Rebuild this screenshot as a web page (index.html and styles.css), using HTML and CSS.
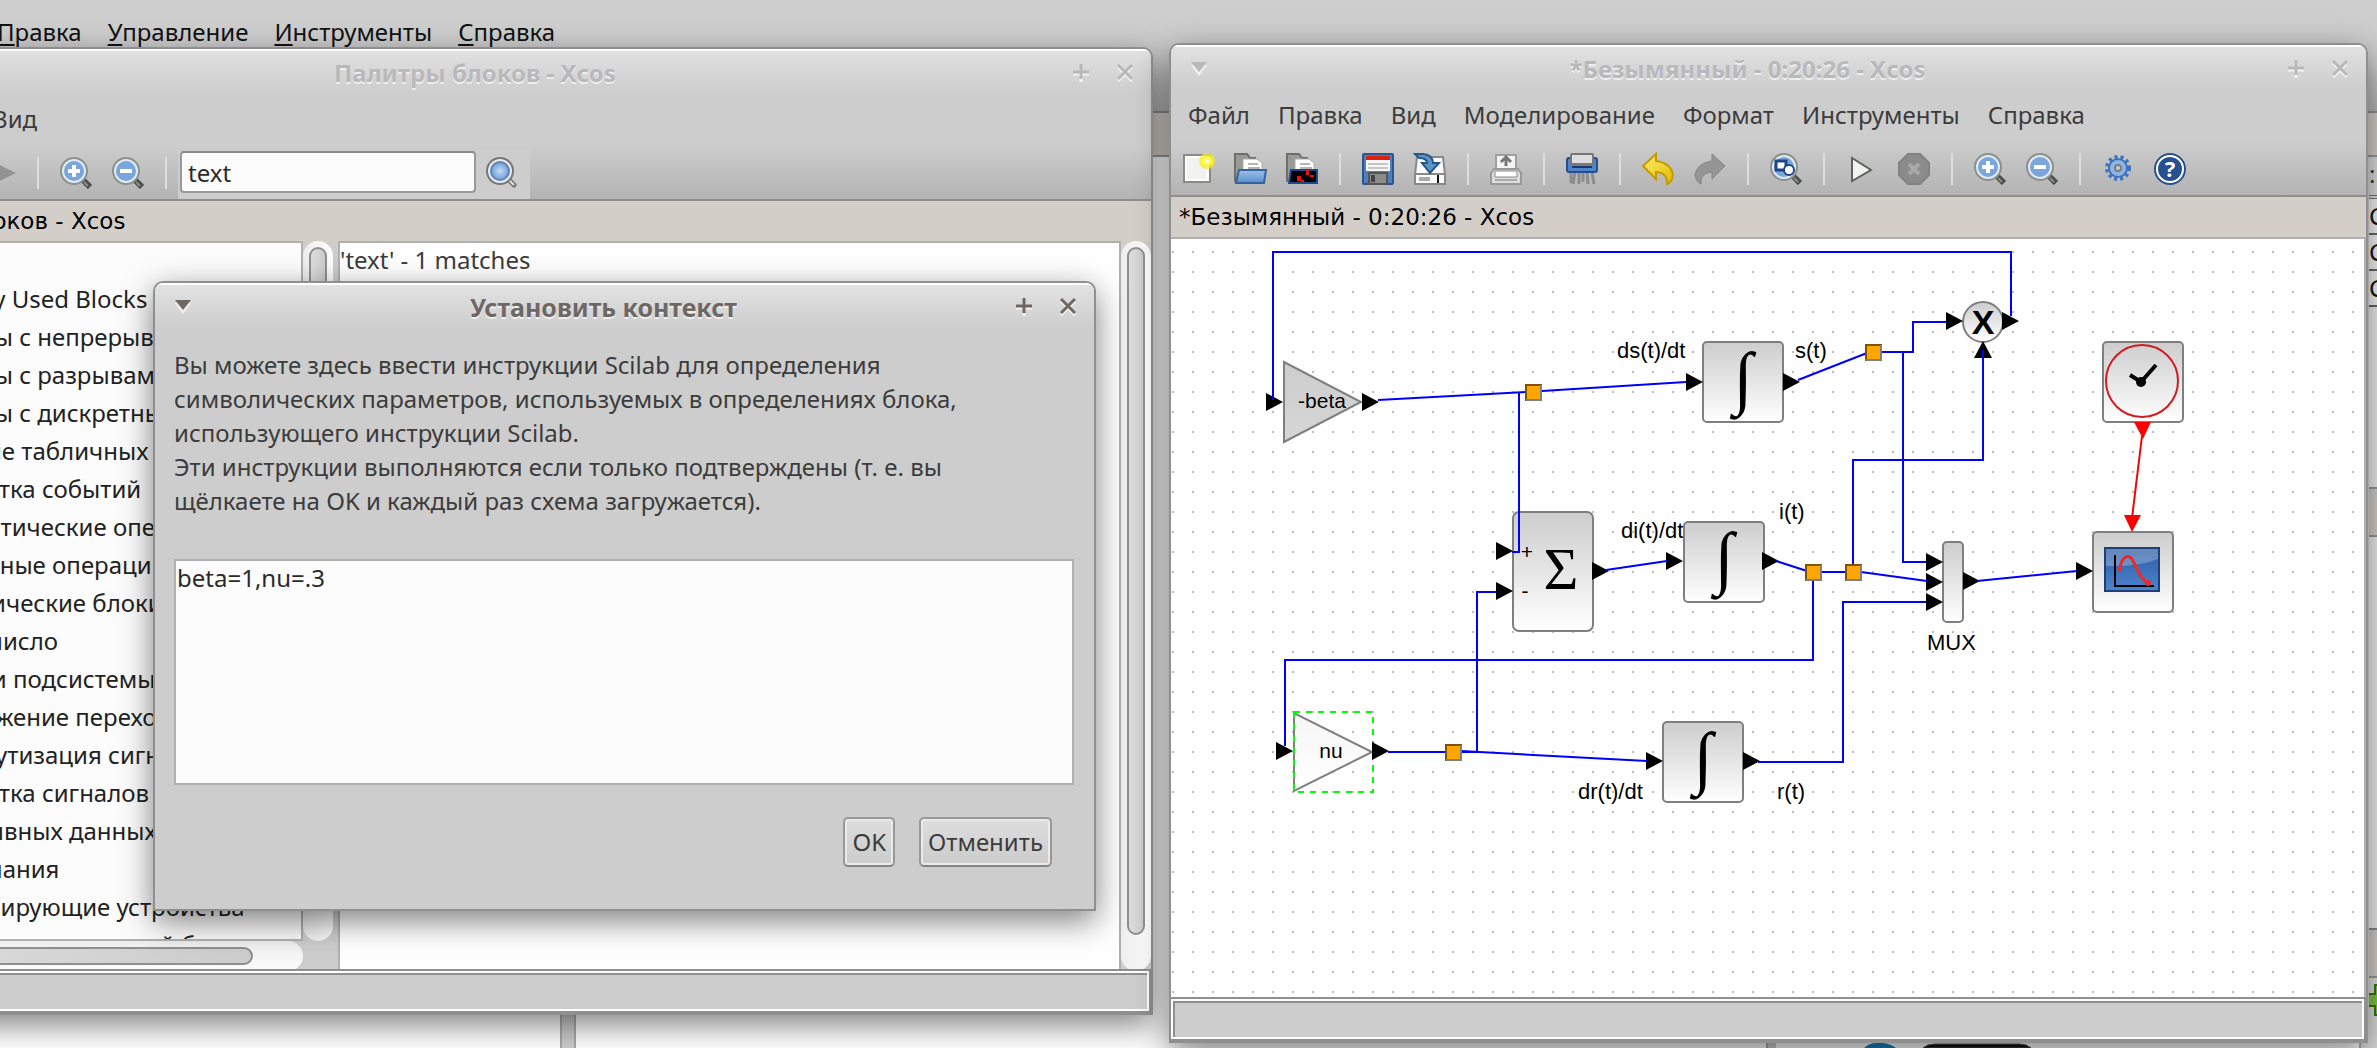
FILE: index.html
```html
<!DOCTYPE html>
<html lang="ru">
<head>
<meta charset="utf-8">
<title>Xcos</title>
<link rel="stylesheet" href="styles.css">
</head>
<body>
<svg class="defs" aria-hidden="true">
  <defs>
    <linearGradient id="block" x1="0" y1="0" x2="0" y2="1"><stop offset="0" stop-color="#cdcdcd"/><stop offset="1" stop-color="#fff"/></linearGradient>
    <linearGradient id="screen" x1="0" y1="0" x2="0" y2="1"><stop offset="0" stop-color="#2f5da3"/><stop offset="1" stop-color="#4b84cf"/></linearGradient>
    <linearGradient id="folder" x1="0" y1="0" x2="0" y2="1"><stop offset="0" stop-color="#9cc0e8"/><stop offset="1" stop-color="#5a8fca"/></linearGradient>
    <linearGradient id="gold" x1="0" y1="0" x2="1" y2="1"><stop offset="0" stop-color="#fdf06a"/><stop offset="1" stop-color="#e2b800"/></linearGradient>
    <radialGradient id="lens"><stop offset="0" stop-color="#c4dbf3"/><stop offset="1" stop-color="#6f9fd8"/></radialGradient>
    <pattern id="dots" x="1172" y="251" width="20" height="20" patternUnits="userSpaceOnUse"><rect width="2" height="2" fill="#bdbdbd"/></pattern>
    <symbol id="glass" viewBox="0 0 32 32">
      <path d="M22 22l8 8" stroke="#4b4f4b" stroke-width="6"/>
      <path d="M24 25l4 4" stroke="#8b8f8a" stroke-width="2"/>
      <circle cx="14" cy="14" r="13" fill="#dfeaf5" stroke="#8d918b" stroke-width="2"/>
      <circle cx="14" cy="14" r="10" fill="#7ba6db"/>
    </symbol>
    <symbol id="zoom-in" viewBox="0 0 32 32"><use href="#glass"/><path d="M14 8v12M8 14h12" stroke="#fff" stroke-width="4"/></symbol>
    <symbol id="zoom-out" viewBox="0 0 32 32"><use href="#glass"/><path d="M8 14h12" stroke="#fff" stroke-width="4"/></symbol>
    <symbol id="plus" viewBox="0 0 16 18"><path d="M8 3v15M0 10h16" stroke="#f3f3f3" stroke-width="3"/><path d="M8 0v15M0 8h16" stroke="currentColor" stroke-width="3"/></symbol>
    <symbol id="cross" viewBox="0 0 16 18"><path d="M1 3l14 14M15 3L1 17" stroke="#f3f3f3" stroke-width="3"/><path d="M1 1l14 14M15 1L1 15" stroke="currentColor" stroke-width="3"/></symbol>
    <symbol id="arrow-down" viewBox="0 0 16 14"><path d="M0 3h16L8 14z" fill="#f0f0f0"/><path d="M0 0h16L8 10z" fill="currentColor"/></symbol>
  </defs>
</svg>

<main class="desktop">
  <section class="console">
    <nav class="console-menu">
      <a href="#"><u>П</u>равка</a><a href="#"><u>У</u>правление</a><a href="#"><u>И</u>нструменты</a><a href="#"><u>С</u>правка</a>
    </nav>
    <div class="console-tab"></div>
    <div class="console-body">
      <div class="pane pane-files"></div>
      <div class="pane pane-command"></div>
      <div class="pane pane-news">
        <svg width="180" height="5"><path d="M1 5Q6 0 14 0h6q8 1 13 5z" fill="#1680bb"/><path d="M60 5q4-4 12-4h84q8 0 12 4z" fill="#111" stroke="#555"/></svg>
      </div>
      <aside class="vars">
        <div class="vars-tools">:..</div>
        <div class="vars-row">C</div><div class="vars-row">C</div><div class="vars-row">C</div>
        <div class="vars-rest"></div>
        <div class="vars-tab"></div>
        <div class="vars-box"></div>
        <div class="vars-tab"></div>
        <div class="vars-add"><svg width="32" height="32"><path d="M6 1h12v9h9v12h-9v9H6V22H-3V10h9z" fill="#7cc644" stroke="#3b7a0a" stroke-width="2"/></svg></div>
      </aside>
    </div>
  </section>

  <section class="window palette">
    <header class="chrome">
      <div class="titlebar">
        <button class="wbtn" aria-label="Меню окна"><svg width="16" height="14"><use href="#arrow-down"/></svg></button>
        <h1>Палитры блоков - Xcos</h1>
        <button class="wbtn" aria-label="Развернуть"><svg width="16" height="18"><use href="#plus"/></svg></button>
        <button class="wbtn" aria-label="Закрыть"><svg width="16" height="18"><use href="#cross"/></svg></button>
      </div>
      <nav class="menubar"><a href="#">Палитра</a><a href="#">Вид</a></nav>
      <div class="toolbar">
        <button class="tool" aria-label="Назад"><svg width="32" height="32"><path d="M27 4v24L0 16z" fill="#929292"/></svg></button>
        <button class="tool" aria-label="Вперёд"><svg width="32" height="32"><path d="M5 3v26l27-13z" fill="#929292"/></svg></button>
        <i class="sep"></i>
        <button class="tool" aria-label="Увеличить"><svg width="32" height="32"><use href="#zoom-in"/></svg></button>
        <button class="tool" aria-label="Уменьшить"><svg width="32" height="32"><use href="#zoom-out"/></svg></button>
        <i class="sep"></i>
        <div class="search">
          <input type="text" value="text" aria-label="Поиск">
          <button class="tool" aria-label="Найти"><svg width="32" height="32" viewBox="0 0 32 32"><path d="M21 21l7 7" stroke="#777" stroke-width="5" stroke-linecap="round"/><path d="M21 21l7 7" stroke="#ddd" stroke-width="2"/><circle cx="14" cy="14" r="13" fill="#e6eaee" stroke="#777" stroke-width="2"/><circle cx="14" cy="14" r="9" fill="url(#lens)" stroke="#5e86b8" stroke-width="2"/></svg></button>
        </div>
      </div>
    </header>
    <div class="tab">Палитры блоков - Xcos</div>
    <div class="palette-body">
      <div class="tree-col">
        <div class="tree-row">
          <ul class="tree">
            <li>Recently Used Blocks</li>
            <li>Системы с непрерывным временем</li>
            <li>Системы с разрывами</li>
            <li>Системы с дискретным временем</li>
            <li>Решение табличных данных</li>
            <li>Обработка событий</li>
            <li>Математические операции</li>
            <li>Матричные операции</li>
            <li>Электрические блоки</li>
            <li>Целое число</li>
            <li>Порты и подсистемы</li>
            <li>Отображение переходов</li>
            <li>Маршрутизация сигналов</li>
            <li>Обработка сигналов</li>
            <li>Для неявных данных</li>
            <li>Примечания</li>
            <li>Регистрирующие устройства</li>
            <li>Термогидравлический блок</li>
          </ul>
          <div class="track"><div class="thumb"></div></div>
        </div>
        <div class="track track-h"><div class="thumb"></div></div>
      </div>
      <div class="results">'text' - 1 matches</div>
      <div class="track track-end"><div class="thumb"></div></div>
    </div>
    <footer class="status"></footer>
  </section>

  <section class="window dialog">
    <div class="titlebar">
      <button class="wbtn" aria-label="Меню окна"><svg width="16" height="14"><use href="#arrow-down"/></svg></button>
      <h1>Установить контекст</h1>
      <button class="wbtn" aria-label="Развернуть"><svg width="16" height="18"><use href="#plus"/></svg></button>
      <button class="wbtn" aria-label="Закрыть"><svg width="16" height="18"><use href="#cross"/></svg></button>
    </div>
    <form class="dialog-body">
      <label for="context">Вы можете здесь ввести инструкции Scilab для определения<br>символических параметров, используемых в определениях блока,<br>использующего инструкции Scilab.<br>Эти инструкции выполняются если только подтверждены (т. е. вы<br>щёлкаете на OK и каждый раз схема загружается).</label>
      <textarea id="context" spellcheck="false">beta=1,nu=.3</textarea>
      <div class="actions"><button type="button" class="btn">OK</button><button type="button" class="btn">Отменить</button></div>
    </form>
  </section>

  <section class="window editor">
    <header class="chrome">
      <div class="titlebar">
        <button class="wbtn" aria-label="Меню окна"><svg width="16" height="14"><use href="#arrow-down"/></svg></button>
        <h1>*Безымянный - 0:20:26 - Xcos</h1>
        <button class="wbtn" aria-label="Развернуть"><svg width="16" height="18"><use href="#plus"/></svg></button>
        <button class="wbtn" aria-label="Закрыть"><svg width="16" height="18"><use href="#cross"/></svg></button>
      </div>
      <nav class="menubar"><a href="#">Файл</a><a href="#">Правка</a><a href="#">Вид</a><a href="#">Моделирование</a><a href="#">Формат</a><a href="#">Инструменты</a><a href="#">Справка</a></nav>
      <div class="toolbar">
        <button class="tool" aria-label="Создать"><svg width="32" height="32"><rect x="2" y="2" width="26" height="27" fill="#f2f2f0" stroke="#8a8a86" stroke-width="2"/><rect x="4" y="4" width="22" height="23" fill="none" stroke="#fff" stroke-width="2"/><circle cx="25" cy="8" r="8" fill="#f7ee20" opacity=".75"/><circle cx="25" cy="8" r="5" fill="#fff94a"/><circle cx="25" cy="8" r="2" fill="#fff"/></svg></button>
        <button class="tool" aria-label="Открыть"><svg width="32" height="32"><path d="M1 29V1h12l3 4h5v6" fill="#9a9a96" stroke="#6e6e6a" stroke-width="2"/><path d="M9 20V6h14l5 4v10z" fill="#fff" stroke="#aaa"/><path d="M14 11h10M14 15h12" stroke="#b5b5b5" stroke-width="2"/><path d="M5 17h27l-2 13H2z" fill="url(#folder)" stroke="#34639f" stroke-width="2"/></svg></button>
        <button class="tool" aria-label="Открыть в Scilab"><svg width="32" height="32"><path d="M1 29V1h12l3 4h5v6" fill="#9a9a96" stroke="#6e6e6a" stroke-width="2"/><path d="M9 20V6h14l5 4v10z" fill="#fff" stroke="#aaa"/><path d="M14 11h10M14 15h12" stroke="#b5b5b5" stroke-width="2"/><path d="M5 17h26v13H3z" fill="#000" stroke="#1d4a8c" stroke-width="2"/><path d="M11 23h4v5h-4zM20 17h3v5h-3zM24 22h4v2h-4zM15 27h3v2h-3z" fill="#e11"/></svg></button>
        <i class="sep"></i>
        <button class="tool" aria-label="Сохранить"><svg width="32" height="32"><rect x="1" y="1" width="30" height="30" rx="1" fill="#4d7fc1" stroke="#2a5591" stroke-width="2"/><rect x="4" y="3" width="24" height="15" fill="#f6f6f6"/><path d="M4 5h24" stroke="#dd2010" stroke-width="4"/><path d="M6 11h20M6 15h20" stroke="#c6c6c6" stroke-width="2"/><rect x="7" y="20" width="18" height="11" fill="#8c8c88" stroke="#555" stroke-width="2"/><path d="M11 22v7" stroke="#444" stroke-width="4"/></svg></button>
        <button class="tool" aria-label="Экспорт"><svg width="32" height="32"><path d="M3 4h26l2 18v9H1v-9z" fill="#fbfbfb" stroke="#888" stroke-width="2"/><path d="M1 21h30" stroke="#888" stroke-width="2"/><path d="M5 26h11" stroke="#aaa" stroke-width="4"/><path d="M24 22v8" stroke="#111" stroke-width="2"/><path d="M1 1h8q10 1 10 9h6l-9 10-8-10h5q0-5-8-5z" fill="#5b93c6" stroke="#245783" stroke-width="2"/></svg></button>
        <i class="sep"></i>
        <button class="tool" aria-label="Печать"><svg width="32" height="32"><path d="M6 17V2h20v15" fill="#f4f4f4" stroke="#a0a0a0" stroke-width="2"/><path d="M16 13V5M11 9l5-5 5 5" fill="none" stroke="#777" stroke-width="3"/><path d="M4 16h24l3 4v11H1V20z" fill="#ddd" stroke="#999" stroke-width="2"/><path d="M5 18h22v6H5z" fill="#fff" stroke="#888"/><path d="M5 27h22" stroke="#aaa" stroke-width="2"/></svg></button>
        <i class="sep"></i>
        <button class="tool" aria-label="Удалить"><svg width="32" height="32"><path d="M5 19v11M9 19l-2 12M13 19v12M17 19v10M21 19l1 12M26 19l2 12" stroke="#8d8d8d" stroke-width="3"/><rect x="1" y="5" width="30" height="14" rx="2" fill="#4f84c8" stroke="#244f8d" stroke-width="2"/><rect x="5" y="1" width="22" height="10" rx="1" fill="#ddd" stroke="#777" stroke-width="2"/><path d="M6 14h20" stroke="#16386d" stroke-width="2"/></svg></button>
        <i class="sep"></i>
        <button class="tool" aria-label="Отменить"><svg width="32" height="32"><path d="M14 1v7q15 2 17 14-1 7-6 9 1-11-11-12v7L1 13z" fill="url(#gold)" stroke="#c59a00" stroke-width="2"/></svg></button>
        <button class="tool" aria-label="Повторить"><svg width="32" height="32"><path d="M18 1v7Q3 10 1 22q1 7 6 9-1-11 11-12v7l13-13z" fill="#959595" stroke="#858585"/></svg></button>
        <i class="sep"></i>
        <button class="tool" aria-label="По размеру"><svg width="32" height="32"><use href="#glass"/><rect x="6" y="8" width="10" height="9" fill="#fff" stroke="#1e4585" stroke-width="3"/><circle cx="19" cy="17" r="5" fill="#fff" stroke="#1e4585" stroke-width="2"/></svg></button>
        <i class="sep"></i>
        <button class="tool" aria-label="Пуск"><svg width="32" height="32"><path d="M6 5v23l19-11z" fill="#f2f2f2" stroke="#5e625c" stroke-width="2"/></svg></button>
        <button class="tool" aria-label="Стоп"><svg width="32" height="32"><path d="M10 1h12l9 9v12l-9 9H10l-9-9V10z" fill="#8b8b8b" stroke="#828282" stroke-width="2"/><path d="M11 11l10 10M21 11L11 21" stroke="#a8a8a8" stroke-width="4"/></svg></button>
        <i class="sep"></i>
        <button class="tool" aria-label="Увеличить"><svg width="32" height="32"><use href="#zoom-in"/></svg></button>
        <button class="tool" aria-label="Уменьшить"><svg width="32" height="32"><use href="#zoom-out"/></svg></button>
        <i class="sep"></i>
        <button class="tool" aria-label="Настройки"><svg width="32" height="32"><circle cx="16" cy="15" r="11" fill="none" stroke="#3d74bd" stroke-width="4" stroke-dasharray="3 3"/><circle cx="16" cy="15" r="9" fill="#8db4e2" stroke="#3d74bd" stroke-width="2"/><circle cx="16" cy="15" r="3" fill="#ccc" stroke="#7d7d7d" stroke-width="2"/></svg></button>
        <button class="tool" aria-label="Справка"><svg width="32" height="32"><circle cx="16" cy="16" r="15" fill="#fff" stroke="#26508f" stroke-width="2"/><circle cx="16" cy="16" r="12" fill="#26508f"/><text x="16" y="24" class="help-mark">?</text></svg></button>
      </div>
    </header>
    <div class="tab">*Безымянный - 0:20:26 - Xcos</div>
    <div class="canvas">
      <svg class="diagram">
        <g transform="translate(-1171 -239)">
          <rect x="1171" y="239" width="1300" height="900" fill="url(#dots)"/>
          <g class="label"><text x="1617" y="358">ds(t)/dt</text><text x="1795" y="358">s(t)</text><text x="1621" y="538">di(t)/dt</text><text x="1779" y="519">i(t)</text><text x="1578" y="799">dr(t)/dt</text><text x="1777" y="799">r(t)</text><text x="1927" y="650">MUX</text></g>
          <g class="shape">
            <path d="M1284 362v80l77-40zM1294 713v78l78-39z"/>
            <rect x="1703" y="342" width="80" height="80" rx="4"/><rect x="1684" y="522" width="80" height="80" rx="4"/><rect x="1663" y="722" width="80" height="80" rx="4"/>
            <rect x="1513" y="512" width="80" height="119" rx="6"/><rect x="1943" y="542" width="20" height="80" rx="4"/>
            <rect x="2103" y="342" width="80" height="80" rx="4"/><rect x="2093" y="532" width="80" height="80" rx="4"/>
            <circle cx="1983" cy="322" r="20"/>
          </g>
          <rect class="selection" x="1294" y="712" width="79" height="80"/>
          <g class="glyphs">
            <text class="integral" x="1743" y="401">∫</text><text class="integral" x="1724" y="581">∫</text><text class="integral" x="1703" y="781">∫</text>
            <text class="sigma" x="1561" y="589">Σ</text><text class="times" x="1983" y="334">X</text>
            <text class="sign" x="1527" y="559">+</text><text class="sign" x="1525" y="598">-</text>
            <text class="name" x="1322" y="408">-beta</text><text class="name" x="1331" y="758">nu</text>
          </g>
          <circle cx="2142" cy="381" r="36" fill="none" stroke="#cf1c20" stroke-width="2"/>
          <path d="M2156 365l-15 17-11-7" fill="none" stroke="#000" stroke-width="4"/><circle cx="2141" cy="382" r="5"/>
          <rect x="2105" y="548" width="54" height="43" fill="url(#screen)" stroke="#1f4077" stroke-width="2"/>
          <path d="M2106 549h52v10q-20 8-52 7z" fill="#fff" opacity=".25"/>
          <path d="M2115 555v31h39" fill="none" stroke="#000" stroke-width="2"/>
          <path d="M2119 571c3-16 10-18 14-10 5 9 8 20 16 22" fill="none" stroke="#ef2929" stroke-width="3"/><circle cx="2148" cy="583" r="3" fill="#ef2929"/>
          <g class="port">
            <path d="M1266 393l17 9-17 9zM1362 393l17 9-17 9zM1686 373l17 9-17 9zM1783 373l17 9-17 9zM1946 312l17 9-17 9zM2002 312l17 9-17 9zM1974 358l9-17 9 17zM1496 542l17 9-17 9zM1496 582l17 9-17 9zM1592 562l17 9-17 9zM1666 552l17 9-17 9zM1762 552l17 9-17 9zM1926 553l17 9-17 9zM1926 573l17 9-17 9zM1926 593l17 9-17 9zM1963 572l17 9-17 9zM2076 562l17 9-17 9zM1276 742l17 9-17 9zM1372 742l17 9-17 9zM1646 752l17 9-17 9zM1743 752l17 9-17 9z"/>
          </g>
          <g class="wire">
            <path d="M1273 400V252H2011V316M1519 392V552H1512M1882 352H1913V322H1946M1903 352V562H1926M1983 350V460H1853V566M1821 572H1846M1813 580V660H1285V746M1926 602H1843V762H1758M1388 752H1478M1477 752V592H1496"/>
            <path d="M1378 400L1526 392L1686 382M1798 380L1867 353M1606 570L1667 561M1776 561L1807 571M1861 572L1927 581M1977 581L2077 571M1461 751L1647 761"/>
          </g>
          <path d="M2142 436L2132 518" stroke="red" stroke-width="2"/><path d="M2134 422h17l-8 17zM2124 515h17l-9 17z" fill="red"/>
          <g class="split">
            <g transform="translate(1526 385)"><rect width="15" height="15"/><path d="M15 0v15H0"/></g>
            <g transform="translate(1866 345)"><rect width="15" height="15"/><path d="M15 0v15H0"/></g>
            <g transform="translate(1806 565)"><rect width="15" height="15"/><path d="M15 0v15H0"/></g>
            <g transform="translate(1846 565)"><rect width="15" height="15"/><path d="M15 0v15H0"/></g>
            <g transform="translate(1446 745)"><rect width="15" height="15"/><path d="M15 0v15H0"/></g>
          </g>
        </g>
      </svg>
    </div>
    <footer class="status"></footer>
  </section>
</main>
</body>
</html>
```
FILE: styles.css
```css
* { box-sizing: border-box; }
body { margin: 0; font: 24px/34px "Noto Sans", sans-serif; color: #3c3c3c; }
button, input, textarea { font: inherit; color: inherit; }
a { color: inherit; text-decoration: none; white-space: nowrap; }
.defs { position: absolute; width: 0; height: 0; }
.desktop { position: relative; height: 100vh; overflow: hidden; background: #cdcdcd; }

/* Main Scilab window behind everything */
.console { height: 100%; display: flex; flex-direction: column; }
.console-menu { height: 113px; display: flex; gap: 26px; margin-left: -3px; padding-top: 15px; color: #111; border-bottom: 2px solid #8f8f8f; background: linear-gradient(#cecece 60%, #b4b4b4); }
.console-menu u { text-underline-offset: 3px; text-decoration-thickness: 2px; }
.console-tab { height: 42px; background: #d4cec8; }
.console-body { flex: 1; display: flex; background: #cdcdcd; border-top: 2px solid #9a9a9a; }
.pane { background: #fff; border-right: 2px solid #aaa; }
.pane-files { width: 562px; }
.pane-command { flex: 1; margin-left: 12px; border-left: 2px solid #aaa; }
.pane-news { width: 585px; margin-left: 8px; display: flex; align-items: flex-end; padding-left: 87px; }
.vars { width: 16px; padding-left: 8px; display: flex; flex-direction: column; background: #dcdcdc; overflow: hidden; }
.vars-tools { height: 42px; border-bottom: 4px double #777; }
.vars-row { height: 36px; border-bottom: 2px solid #666; background: #f4f4f4; color: #111; }
.vars-rest { height: 182px; border-bottom: 2px solid #999; background: #eee; }
.vars-tab { height: 48px; background: #d4cec8; border-top: 6px solid #cdcdcd; border-bottom: 2px solid #999; flex: none; }
.vars-box { flex: 1; background: #eee; border-bottom: 2px solid #888; }
.vars-add { height: 70px; padding-top: 6px; }

/* Window frame */
.window { position: absolute; display: flex; flex-direction: column; background: #cdcdcd; border: 2px solid #8f8f8f; border-radius: 10px 10px 0 0; box-shadow: 0 10px 32px rgba(0, 0, 0, .5); overflow: hidden; }
.chrome { background: linear-gradient(#e2e2e2, #cdcdcd 44px, #cdcdcd 96px, #b3b3b3); border-bottom: 2px solid #8f8f8f; }
.titlebar { display: flex; height: 46px; padding: 3px 4px 0 6px; border-top: 2px solid #fff; color: #b9b9bb; }
.titlebar h1 { flex: 1; margin: 2px 0 0; font-size: 24px; line-height: 34px; font-weight: 700; text-align: center; text-shadow: 0 2px 0 #eee; white-space: nowrap; }
.wbtn { flex: none; width: 44px; height: 38px; border: 0; padding: 0; background: none; }
.wbtn svg { display: block; margin: auto; }
.menubar { display: flex; gap: 28px; height: 47px; padding: 7px 17px; }
.toolbar { display: flex; height: 57px; padding-left: 1px; }
.tool { width: 52px; height: 32px; margin-top: 15px; padding: 0; border: 0; background: none; flex: none; }
.tool svg { display: block; margin: auto; overflow: visible; }
.sep { width: 24px; height: 32px; margin-top: 15px; padding: 0 11px; flex: none; }
.sep::before { content: ""; display: block; width: 2px; height: 32px; background: #dedede; }
.help-mark { font: 700 22px "Noto Sans", sans-serif; fill: #fff; text-anchor: middle; }
.tab { height: 40px; flex: none; padding: 0 8px; background: #d4cec8; color: #000; font: 23px/40px "DejaVu Sans", sans-serif; white-space: nowrap; }
.status { height: 40px; flex: none; border: 2px solid #fff; background: #cdcdcd; box-shadow: inset 2px 2px 0 #8f8f8f; margin: 0 2px 2px 0; outline: 2px solid #8f8f8f; }

/* Palette browser */
.palette { left: -161px; top: 47px; width: 1314px; bottom: 33px; }
.palette .menubar { padding-left: 24px; }
.palette .toolbar { padding-left: 81px; }
.search { display: flex; height: 50px; align-self: flex-end; background: #cdcdcd; width: 352px; padding-left: 2px; }
.search input { width: 296px; height: 42px; margin-top: 2px; padding: 0 6px; border: 2px solid #999; border-top-color: #888; border-radius: 4px; background: #fcfcfc; color: #2a2a2a; }
.search .tool { margin-top: 8px; }
.palette-body { flex: 1; min-height: 0; display: flex; }
.tree-col { width: 492px; display: flex; flex-direction: column; }
.tree-row { flex: 1; min-height: 0; display: flex; }
.tree { flex: 1; min-width: 0; margin: 0; padding: 37px 0 0 67px; list-style: none; overflow: hidden; background: #fcfcfc; border: 2px solid #b0b0b0; color: #222; line-height: 38px; white-space: nowrap; }
.track { width: 30px; flex: none; padding: 6px; border-radius: 15px; background: linear-gradient(90deg, #eee, #fdfdfd); }
.thumb { height: 100%; border: 2px solid #8f8f8f; border-radius: 9px; background: linear-gradient(90deg, #dedede, #cdcdcd); }
.tree-row .thumb { height: 70%; }
.track-h { width: 462px; height: 30px; background: linear-gradient(#eee, #fdfdfd); }
.track-h .thumb { width: 406px; }
.results { flex: 1; margin-left: 5px; background: #fff; border: 2px solid #b0b0b0; }
.track-end { width: 30px; padding: 6px 6px 36px; }

/* Context dialog */
.dialog { left: 153px; top: 281px; width: 943px; }
.dialog .titlebar { color: #6e6865; background: linear-gradient(#e2e2e2, #cdcdcd); }
.dialog h1 { font-size: 25px; }
.dialog-body { padding: 19px 20px 42px 19px; display: flex; flex-direction: column; white-space: nowrap; }
.dialog-body textarea { height: 226px; margin-top: 41px; padding: 0 1px; border: 2px solid #b0b0b0; background: #fcfcfc; color: #2a2a2a; resize: none; }
.actions { display: flex; justify-content: flex-end; gap: 24px; margin: 32px 22px 0 0; }
.btn { height: 50px; padding: 0 7px; border: 2px solid #999; border-bottom-color: #858585; border-radius: 5px; background: linear-gradient(#dedede, #cbcbcb); box-shadow: inset 0 0 0 2px #eaeaea; }

/* Diagram editor */
.editor { left: 1169px; right: 9px; top: 43px; bottom: 5px; }
.canvas { flex: 1; min-height: 0; background: #fff; border: 2px solid #b0b0b0; border-width: 0 2px 2px 0; box-shadow: inset 0 2px 0 #b0b0b0; }
.diagram { display: block; width: 100%; height: 100%; }
.editor .canvas .diagram { padding-top: 2px; }
.diagram text { font-family: "Liberation Sans", Arial, sans-serif; font-size: 21px; fill: #000; }
.diagram .label text { font-size: 22px; }
.shape { fill: url(#block); stroke: #7f7f7f; stroke-width: 2; }
.selection { fill: none; stroke: #0f0; stroke-width: 2; stroke-dasharray: 6 6; }
.wire { fill: none; stroke: #00f; stroke-width: 2; }
.split rect { fill: orange; stroke: #805300; stroke-width: 2; }
.split path { fill: none; stroke: #808080; stroke-width: 2; }
.glyphs { text-anchor: middle; }
.diagram .integral { font-family: "Liberation Serif", serif; font-size: 70px; }
.diagram .sigma { font-family: "Liberation Serif", serif; font-size: 60px; }
.diagram .times { font-size: 34px; font-weight: 700; }
```
